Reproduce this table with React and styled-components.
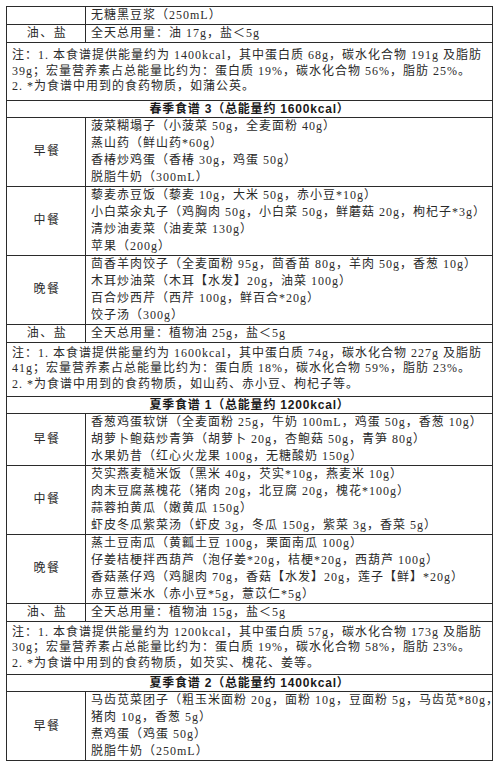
import React from 'react';
import styled, { createGlobalStyle } from 'styled-components';

const GlobalStyle = createGlobalStyle`
  html, body {
    margin: 0;
    padding: 0;
    background: #ffffff;
  }
  body {
    font-family: "Liberation Serif", "Noto Sans CJK SC", serif;
    color: #2a2a2a;
  }
`;

const sections = [
  {
    rows: [
      { label: '', lines: ['无糖黑豆浆（250mL）'] },
      { label: '油、盐', lines: ['全天总用量：油 17g，盐＜5g'] },
    ],
    note: {
      pad: 5,
      lines: [
        '注：1. 本食谱提供能量约为 1400kcal，其中蛋白质 68g，碳水化合物 191g 及脂肪',
        '39g；宏量营养素占总能量比约为：蛋白质 19%，碳水化合物 56%，脂肪 25%。',
        '2. *为食谱中用到的食药物质，如蒲公英。',
      ],
    },
  },
  {
    title: '春季食谱 3（总能量约 1600kcal）',
    rows: [
      {
        label: '早餐',
        lines: [
          '菠菜糊塌子（小菠菜 50g，全麦面粉 40g）',
          '蒸山药（鲜山药*60g）',
          '香椿炒鸡蛋（香椿 30g，鸡蛋 50g）',
          '脱脂牛奶（300mL）',
        ],
      },
      {
        label: '中餐',
        lines: [
          '藜麦赤豆饭（藜麦 10g，大米 50g，赤小豆*10g）',
          '小白菜汆丸子（鸡胸肉 50g，小白菜 50g，鲜蘑菇 20g，枸杞子*3g）',
          '清炒油麦菜（油麦菜 130g）',
          '苹果（200g）',
        ],
      },
      {
        label: '晚餐',
        lines: [
          '茴香羊肉饺子（全麦面粉 95g，茴香苗 80g，羊肉 50g，香葱 10g）',
          '木耳炒油菜（木耳【水发】20g，油菜 100g）',
          '百合炒西芹（西芹 100g，鲜百合*20g）',
          '饺子汤（300g）',
        ],
      },
      { label: '油、盐', lines: ['全天总用量：植物油 25g，盐＜5g'] },
    ],
    note: {
      pad: 3,
      lines: [
        '注：1. 本食谱提供能量约为 1600kcal，其中蛋白质 74g，碳水化合物 227g 及脂肪',
        '41g；宏量营养素占总能量比约为：蛋白质 18%，碳水化合物 59%，脂肪 23%。',
        '2. *为食谱中用到的食药物质，如山药、赤小豆、枸杞子等。',
      ],
    },
  },
  {
    title: '夏季食谱 1（总能量约 1200kcal）',
    rows: [
      {
        label: '早餐',
        lines: [
          '香葱鸡蛋软饼（全麦面粉 25g，牛奶 100mL，鸡蛋 50g，香葱 10g）',
          '胡萝卜鲍菇炒青笋（胡萝卜 20g，杏鲍菇 50g，青笋 80g）',
          '水果奶昔（红心火龙果 100g，无糖酸奶 150g）',
        ],
      },
      {
        label: '中餐',
        lines: [
          '芡实燕麦糙米饭（黑米 40g，芡实*10g，燕麦米 10g）',
          '肉末豆腐蒸槐花（猪肉 20g，北豆腐 20g，槐花*100g）',
          '蒜蓉拍黄瓜（嫩黄瓜 150g）',
          '虾皮冬瓜紫菜汤（虾皮 3g，冬瓜 150g，紫菜 3g，香菜 5g）',
        ],
      },
      {
        label: '晚餐',
        lines: [
          '蒸土豆南瓜（黄瓤土豆 100g，栗面南瓜 100g）',
          '仔姜桔梗拌西葫芦（泡仔姜*20g，桔梗*20g，西葫芦 100g）',
          '香菇蒸仔鸡（鸡腿肉 70g，香菇【水发】20g，莲子【鲜】*20g）',
          '赤豆薏米水（赤小豆*5g，薏苡仁*5g）',
        ],
      },
      { label: '油、盐', lines: ['全天总用量：植物油 15g，盐＜5g'] },
    ],
    note: {
      pad: 3,
      lines: [
        '注：1. 本食谱提供能量约为 1200kcal，其中蛋白质 57g，碳水化合物 173g 及脂肪',
        '30g；宏量营养素占总能量比约为：蛋白质 19%，碳水化合物 58%，脂肪 23%。',
        '2. *为食谱中用到的食药物质，如芡实、槐花、姜等。',
      ],
    },
  },
  {
    title: '夏季食谱 2（总能量约 1400kcal）',
    rows: [
      {
        label: '早餐',
        lines: [
          { text: '马齿苋菜团子（粗玉米面粉 20g，面粉 10g，豆面粉 5g，马齿苋*80g，', full: true },
          '猪肉 10g，香葱 5g）',
          '煮鸡蛋（鸡蛋 50g）',
          '脱脂牛奶（250mL）',
        ],
      },
    ],
  },
];

export default function App() {
  return (
    <>
      <GlobalStyle />
      <Page>
        <Table>
          {sections.map((section, si) => (
            <React.Fragment key={si}>
              {section.title && <TitleRow>{section.title}</TitleRow>}
              {section.rows.map((row, ri) => (
                <Row key={ri}>
                  <Label>{row.label}</Label>
                  <Dishes>
                    {row.lines.map((line, li) =>
                      typeof line === 'string' ? (
                        <Line key={li}>{line}</Line>
                      ) : (
                        <Line key={li} $full={line.full}>{line.text}</Line>
                      )
                    )}
                  </Dishes>
                </Row>
              ))}
              {section.note && (
                <NoteRow $pad={section.note.pad}>
                  {section.note.lines.map((line, li) => (
                    <NoteLine key={li} $full={li === 0}>{line}</NoteLine>
                  ))}
                </NoteRow>
              )}
            </React.Fragment>
          ))}
        </Table>
      </Page>
    </>
  );
}

const Page = styled.div`
  padding: 6px 0 0 6px;
  width: 500px;
  box-sizing: border-box;
`;

const Table = styled.div`
  width: 487px;
  box-sizing: border-box;
  border: 1px solid #2b2b2b;
  border-bottom: none;
  font-size: 12px;
  letter-spacing: 1px;
`;

const Row = styled.div`
  display: grid;
  grid-template-columns: 79px 1fr;
  border-bottom: 1px solid #2b2b2b;
`;

const Label = styled.div`
  display: flex;
  align-items: center;
  justify-content: center;
  border-right: 1px solid #2b2b2b;
  letter-spacing: 1.5px;
  padding-left: 2px;
  line-height: 17px;
`;

const Dishes = styled.div`
  display: flex;
  flex-direction: column;
  padding: 0 0 0 5px;
`;

const Line = styled.div`
  line-height: 17px;
  text-align-last: ${(p) => (p.$full ? 'justify' : 'auto')};
  white-space: nowrap;
  overflow: hidden;
  padding-right: ${(p) => (p.$full ? '2px' : '0')};
`;

const TitleRow = styled.div`
  border-bottom: 1px solid #2b2b2b;
  text-align: center;
  font-family: "Liberation Sans", "Noto Sans CJK SC", sans-serif;
  font-weight: 700;
  line-height: 16px;
  letter-spacing: 0.8px;
  color: #1a1a1a;
`;

const NoteRow = styled.div`
  border-bottom: 1px solid #2b2b2b;
  padding: ${(p) => p.$pad}px 15px ${(p) => p.$pad}px 5px;
`;

const NoteLine = styled.div`
  line-height: 15.6px;
  text-align-last: ${(p) => (p.$full ? 'justify' : 'auto')};
  white-space: nowrap;
`;
